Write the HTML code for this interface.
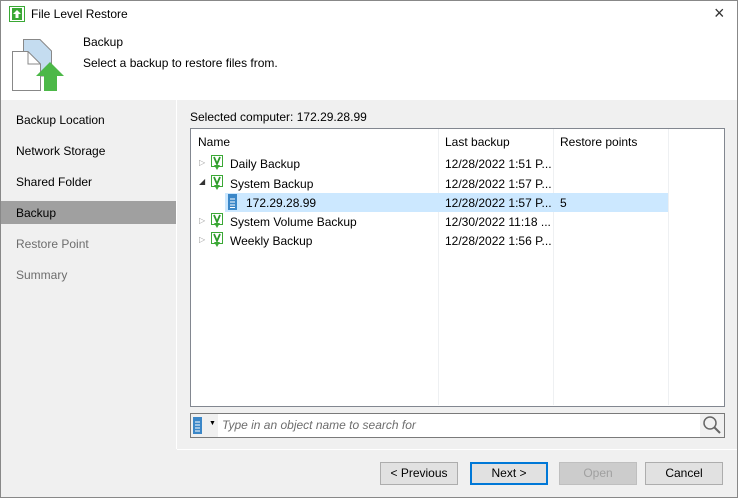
<!DOCTYPE html>
<html><head><style>
*{margin:0;padding:0;box-sizing:border-box}
body{width:738px;height:498px;position:relative;overflow:hidden;font-family:"Liberation Sans",sans-serif;font-size:12px;color:#000;background:#f0f0f0}
.a{position:absolute}
.nav{left:16px;font-size:12px}
.btn{position:absolute;top:462px;width:78px;height:23px;border:1px solid #adadad;background:#e1e1e1;text-align:center;line-height:21px;font-size:12px}
.vl{position:absolute;top:129px;width:1px;height:276px;background:#eef0f2}
.tri{position:absolute;font-size:8px;color:#999}
</style></head><body>
<div class="a" style="left:0;top:0;width:738px;height:498px;border:1px solid #888"></div>
<div class="a" style="left:1px;top:1px;width:736px;height:99px;background:#fff"></div>
<svg class="a" style="left:9px;top:6px" width="16" height="16"><rect x="0.5" y="0.5" width="15" height="15" fill="#fff" stroke="#3aa835"/><rect x="3" y="2" width="10" height="12" fill="#3aa835"/><path d="M8 4 L12 8 H9.5 V12 H6.5 V8 H4Z" fill="#fff"/></svg>
<div class="a" style="left:31px;top:7px;font-size:12px">File Level Restore</div>
<div class="a" style="left:714px;top:3px;font-size:18px;color:#333">×</div>
<svg class="a" style="left:10px;top:36px" width="56" height="58"><path d="M13.5 3.5 H30 L41.5 15 V40 H13.5Z" fill="#c4dcf0" stroke="#888"/><path d="M2.5 15.5 H18 L30.5 28 V54.5 H2.5Z" fill="#fff" stroke="#888"/><path d="M18 15.5 V28 H30.5" fill="none" stroke="#888"/><path d="M40 26 L54 40 H47 V55 H34 V40 H26Z" fill="#4cb848"/></svg>
<div class="a" style="left:83px;top:35px">Backup</div>
<div class="a" style="left:83px;top:56px">Select a backup to restore files from.</div>
<div class="a" style="left:1px;top:100px;width:175px;height:397px;background:#f0f0f0"></div>
<div class="a" style="left:176px;top:100px;width:1px;height:349px;background:#fff"></div>
<div class="a" style="left:1px;top:201px;width:175px;height:23px;background:#a0a0a0"></div>
<div class="a nav" style="top:113px">Backup Location</div>
<div class="a nav" style="top:144px">Network Storage</div>
<div class="a nav" style="top:175px">Shared Folder</div>
<div class="a nav" style="top:206px">Backup</div>
<div class="a nav" style="top:237px;color:#6d6d6d">Restore Point</div>
<div class="a nav" style="top:268px;color:#6d6d6d">Summary</div>
<div class="a" style="left:190px;top:110px">Selected computer: 172.29.28.99</div>
<div class="a" style="left:190px;top:128px;width:535px;height:279px;background:#fff;border:1px solid #828790"></div>
<div class="vl" style="left:438px"></div><div class="vl" style="left:553px"></div><div class="vl" style="left:668px"></div>
<div class="a" style="left:198px;top:135px">Name</div>
<div class="a" style="left:445px;top:135px">Last backup</div>
<div class="a" style="left:560px;top:135px">Restore points</div>
<div class="a" style="left:225px;top:193px;width:443px;height:19px;background:#cce8ff"></div>
<svg width="0" height="0" style="position:absolute"><defs><g id="v"><rect x="0.5" y="0.5" width="11" height="11" fill="#fff" stroke="#3aa835"/><path d="M3 2 L6 9 L9 2" fill="none" stroke="#2e9a2a" stroke-width="1.8"/><path d="M3 10 H9 L6 15Z" fill="#3aa835"/></g></defs></svg>
<div class="tri" style="left:199px;top:158px">▷</div>
<svg class="a" style="left:211px;top:155px" width="13" height="16"><use href="#v"/></svg>
<div class="a" style="left:230px;top:157px">Daily Backup</div>
<div class="tri" style="left:199px;top:177px;color:#333">◢</div>
<svg class="a" style="left:211px;top:175px" width="13" height="16"><use href="#v"/></svg>
<div class="a" style="left:230px;top:177px">System Backup</div>
<svg class="a" style="left:228px;top:194px" width="9" height="16"><rect width="9" height="16" fill="#3b87c8"/><path d="M2 5H7M2 8H7M2 11H7M2 13.5H7" stroke="#fff"/></svg>
<div class="a" style="left:246px;top:196px">172.29.28.99</div>
<div class="tri" style="left:199px;top:216px">▷</div>
<svg class="a" style="left:211px;top:213px" width="13" height="16"><use href="#v"/></svg>
<div class="a" style="left:230px;top:215px">System Volume Backup</div>
<div class="tri" style="left:199px;top:235px">▷</div>
<svg class="a" style="left:211px;top:232px" width="13" height="16"><use href="#v"/></svg>
<div class="a" style="left:230px;top:234px">Weekly Backup</div>
<div class="a" style="left:445px;top:157px">12/28/2022 1:51 P...</div>
<div class="a" style="left:445px;top:177px">12/28/2022 1:57 P...</div>
<div class="a" style="left:445px;top:196px">12/28/2022 1:57 P...</div>
<div class="a" style="left:560px;top:196px">5</div>
<div class="a" style="left:445px;top:215px">12/30/2022 11:18 ...</div>
<div class="a" style="left:445px;top:234px">12/28/2022 1:56 P...</div>
<div class="a" style="left:190px;top:413px;width:535px;height:25px;background:#fff;border:1px solid #7a7a7a"></div>
<div class="a" style="left:191px;top:414px;width:27px;height:23px;background:#f0f0f0"></div>
<svg class="a" style="left:193px;top:417px" width="9" height="17"><rect width="9" height="17" fill="#3b87c8"/><path d="M2 5H7M2 8H7M2 11H7M2 14H7" stroke="#fff"/></svg>
<div class="a" style="left:209px;top:420px;font-size:7px">▼</div>
<div class="a" style="left:222px;top:418px;color:#6d6d6d;font-style:italic">Type in an object name to search for</div>
<div class="a" style="left:700px;top:414px;width:24px;height:23px;background:#f0f0f0"></div>
<svg class="a" style="left:702px;top:415px" width="20" height="20"><circle cx="8" cy="8" r="6" fill="none" stroke="#666" stroke-width="1.5"/><path d="M12.5 12.5 L18 18" stroke="#666" stroke-width="2"/></svg>
<div class="a" style="left:177px;top:449px;width:560px;height:1px;background:#fff"></div>
<div class="btn" style="left:380px">&lt; Previous</div>
<div class="btn" style="left:470px;border:2px solid #0078d7;line-height:19px">Next &gt;</div>
<div class="btn" style="left:559px;background:#ccc;border-color:#bfbfbf;color:#a0a0a0">Open</div>
<div class="btn" style="left:645px">Cancel</div>
</body></html>
